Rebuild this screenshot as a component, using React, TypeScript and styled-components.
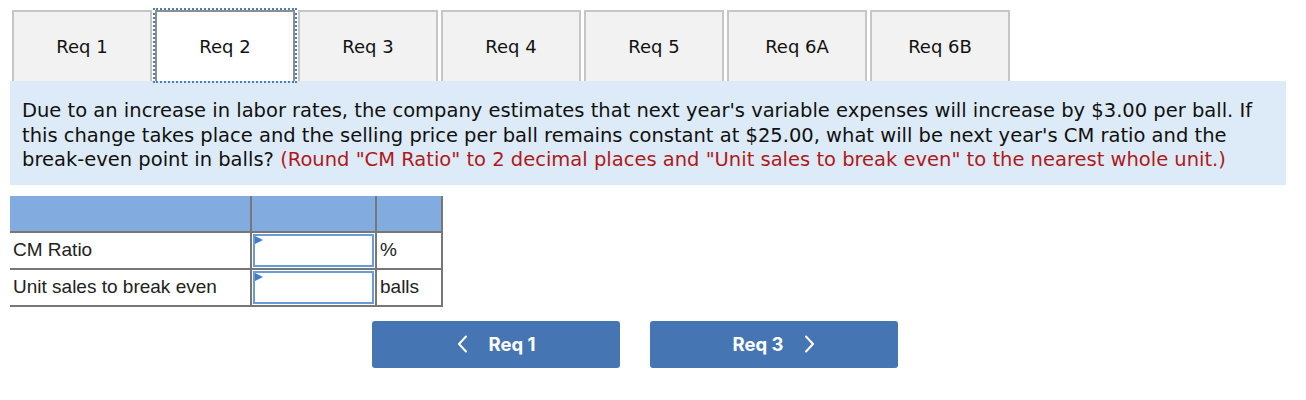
import styled, { createGlobalStyle } from "styled-components";

const GlobalStyle = createGlobalStyle`
  body {
    margin: 0;
    background: #ffffff;
    font-family: "DejaVu Sans", Verdana, sans-serif;
  }
`;

const Page = styled.div`
  padding: 10px 20px 0 10px;
`;

const TabList = styled.div`
  display: flex;
  gap: 3px;
  padding-left: 2px;
`;

const Tab = styled.button<{ $active?: boolean }>`
  box-sizing: border-box;
  width: 140px;
  height: 71px;
  padding: 0;
  font-family: "DejaVu Sans", Verdana, sans-serif;
  font-size: 18px;
  color: #111;
  cursor: pointer;
  background: ${(p) => (p.$active ? "#ffffff" : "#f2f2f2")};
  border: 2px solid ${(p) => (p.$active ? "#8e8e8e" : "#c6c6c6")};
  border-bottom: none;
  outline: ${(p) => (p.$active ? "2px dotted #4a7cc4" : "none")};
  outline-offset: 0;
  position: relative;
  z-index: ${(p) => (p.$active ? 1 : 0)};
`;

const Panel = styled.div`
  width: 1276px;
  box-sizing: border-box;
  background: #ddebf8;
  padding: 18px 12px 12px;
  font-size: 19.5px;
  line-height: 24.5px;
  color: #111;
`;

const Hint = styled.span`
  color: #b0191b;
`;

const Table = styled.table`
  margin-top: 11px;
  border-collapse: collapse;
  font-family: "Liberation Sans", Arial, sans-serif;
  font-size: 19px;
  color: #222;
`;

const HeadCell = styled.td<{ $w: number }>`
  width: ${(p) => p.$w}px;
  height: 36px;
  background: #82abdf;
  border-left: 2px solid #777;
  border-right: 2px solid #777;
  border-bottom: 2px solid #777;
  box-sizing: border-box;
  padding: 0;
  &:first-child {
    border-left: none;
  }
`;

const Cell = styled.td`
  height: 34px;
  border: 2px solid #777;
  padding: 0 3px;
  &:first-child {
    border-left: none;
  }
`;

const InputCell = styled.td`
  border: 2px solid #777;
  padding: 1px;
`;

const Entry = styled.div`
  position: relative;
  height: 33px;
  border: 2px solid #6b9bd6;
  box-sizing: border-box;
  background: #fff;
  &::before {
    content: "";
    position: absolute;
    left: 0;
    top: 0;
    border-left: 8px solid #3f7cc9;
    border-top: 4px solid transparent;
    border-bottom: 4px solid transparent;
  }
`;

const NavRow = styled.div`
  display: flex;
  gap: 30px;
  margin-top: 14px;
  padding-left: 362px;
`;

const NavButton = styled.button`
  width: 248px;
  height: 47px;
  display: flex;
  align-items: center;
  justify-content: center;
  gap: 21px;
  background: #4675b3;
  color: #fff;
  border: none;
  border-radius: 3px;
  font-family: Inter, Roboto, sans-serif;
  font-weight: 700;
  font-size: 18.5px;
  cursor: pointer;
`;

const Chevron = ({ dir }: { dir: "left" | "right" }) => (
  <svg width="11" height="18" viewBox="0 0 11 18" fill="none">
    <path
      d={dir === "left" ? "M9 1.5 L2 9 L9 16.5" : "M2 1.5 L9 9 L2 16.5"}
      stroke="#fff"
      strokeWidth="2"
      strokeLinecap="round"
      strokeLinejoin="round"
    />
  </svg>
);

const tabs = ["Req 1", "Req 2", "Req 3", "Req 4", "Req 5", "Req 6A", "Req 6B"];

export default function App() {
  return (
    <>
      <GlobalStyle />
      <Page>
        <TabList>
          {tabs.map((t) => (
            <Tab key={t} $active={t === "Req 2"}>
              {t}
            </Tab>
          ))}
        </TabList>
        <Panel>
          Due to an increase in labor rates, the company estimates that next year's variable expenses will
          increase by $3.00 per ball. If this change takes place and the selling price per ball remains
          constant at $25.00, what will be next year's CM ratio and the break-even point in balls?{" "}
          <Hint>
            (Round "CM Ratio" to 2 decimal places and "Unit sales to break even" to the nearest whole unit.)
          </Hint>
        </Panel>
        <Table>
          <tbody>
            <tr>
              <HeadCell $w={241} />
              <HeadCell $w={125} />
              <HeadCell $w={66} />
            </tr>
            <tr>
              <Cell>CM Ratio</Cell>
              <InputCell>
                <Entry />
              </InputCell>
              <Cell>%</Cell>
            </tr>
            <tr>
              <Cell>Unit sales to break even</Cell>
              <InputCell>
                <Entry />
              </InputCell>
              <Cell>balls</Cell>
            </tr>
          </tbody>
        </Table>
        <NavRow>
          <NavButton>
            <Chevron dir="left" />
            Req 1
          </NavButton>
          <NavButton>
            Req 3
            <Chevron dir="right" />
          </NavButton>
        </NavRow>
      </Page>
    </>
  );
}
